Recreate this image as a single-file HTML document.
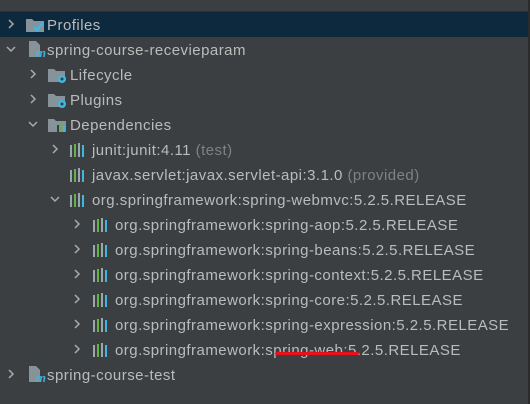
<!DOCTYPE html>
<html><head><style>
body{margin:0;width:530px;height:404px;background:#3c3f41;overflow:hidden;font-family:"Liberation Sans",sans-serif;font-size:15px;letter-spacing:0.47px;color:#bbbbbb;position:relative}
.tb{position:absolute;left:0;top:0;width:530px;height:11px;background:#3c3f41;border-bottom:1px solid #323232}
.r{position:absolute;left:0;width:528px;height:25px;line-height:25px;white-space:nowrap}
.sel{background:#0d293e}
.ch{position:absolute;top:0;width:10px;height:25px}
.ic{position:absolute;top:5px}
.t{position:absolute;top:1px}
.g{color:#808080}
.edge{position:absolute;right:0;top:0;width:2px;height:404px;background:#2b2b2b}
</style></head><body>
<div class="tb"></div>
<svg width="0" height="0" style="position:absolute"><defs>
<symbol id="cr" viewBox="0 0 10 10"><path d="M3 1 L7 5 L3 9" fill="none" stroke="#aaa" stroke-width="1.5"/></symbol>
<symbol id="cd" viewBox="0 0 10 10"><path d="M1 3 L5 7 L9 3" fill="none" stroke="#aaa" stroke-width="1.5"/></symbol>
<symbol id="lib" viewBox="0 0 18 16"><rect x="1" y="3" width="2" height="12" fill="#9aa7b0"/><rect x="5" y="2" width="2" height="13" fill="#62b543"/><rect x="9" y="1" width="2" height="14" fill="#9aa7b0"/><rect x="13" y="3" width="2" height="12" fill="#40b6e0"/></symbol>
<symbol id="fold" viewBox="0 0 20 16"><path d="M1 2h6l2 2h9v11H1z" fill="#87939a"/><circle cx="15" cy="12" r="4" fill="#40b6e0"/><circle cx="15" cy="12" r="1.5" fill="#3c3f41"/></symbol>
</defs></svg>
<div class="r sel" style="top:12px"><svg class="ch" style="left:6px;top:7px;height:10px" viewBox="0 0 10 10"><use href="#cr"/></svg><svg class="ic" width="20" height="16" style="left:25px"><path d="M1 2h6l2 2h10v11H1z" fill="#87939a"/><path d="M9 10l3 3 6-7" fill="none" stroke="#40b6e0" stroke-width="2.5"/></svg><span class="t" style="left:47px">Profiles</span></div>
<div class="r" style="top:37px"><svg class="ch" style="left:6px;top:7px;height:10px" viewBox="0 0 10 10"><use href="#cd"/></svg><svg class="ic" width="20" height="18" style="left:27px;top:3px"><path d="M2 1h7l4 4v12H2z" fill="#87939a"/><text x="9" y="17" font-size="11" font-style="italic" font-weight="bold" fill="#40b6e0">m</text></svg><span class="t" style="left:47px">spring-course-recevieparam</span></div>
<div class="r" style="top:62px"><svg class="ch" style="left:28px;top:7px;height:10px" viewBox="0 0 10 10"><use href="#cr"/></svg><svg class="ic" width="20" height="16" style="left:47px"><use href="#fold"/></svg><span class="t" style="left:70px">Lifecycle</span></div>
<div class="r" style="top:87px"><svg class="ch" style="left:28px;top:7px;height:10px" viewBox="0 0 10 10"><use href="#cr"/></svg><svg class="ic" width="20" height="16" style="left:47px"><use href="#fold"/></svg><span class="t" style="left:70px">Plugins</span></div>
<div class="r" style="top:112px"><svg class="ch" style="left:28px;top:7px;height:10px" viewBox="0 0 10 10"><use href="#cd"/></svg><svg class="ic" width="20" height="16" style="left:47px"><path d="M1 2h6l2 2h10v11H1z" fill="#87939a"/><rect x="10" y="8" width="2" height="7" fill="#3c3f41"/><rect x="13" y="7" width="2" height="8" fill="#62b543"/><rect x="16" y="9" width="2" height="6" fill="#40b6e0"/></svg><span class="t" style="left:70px">Dependencies</span></div>
<div class="r" style="top:137px"><svg class="ch" style="left:50px;top:7px;height:10px" viewBox="0 0 10 10"><use href="#cr"/></svg><svg class="ic" width="18" height="16" style="left:69px"><use href="#lib"/></svg><span class="t" style="left:92px">junit:junit:4.11 <span class="g">(test)</span></span></div>
<div class="r" style="top:162px"><svg class="ic" width="18" height="16" style="left:69px"><use href="#lib"/></svg><span class="t" style="left:92px">javax.servlet:javax.servlet-api:3.1.0 <span class="g">(provided)</span></span></div>
<div class="r" style="top:187px"><svg class="ch" style="left:50px;top:7px;height:10px" viewBox="0 0 10 10"><use href="#cd"/></svg><svg class="ic" width="18" height="16" style="left:69px"><use href="#lib"/></svg><span class="t" style="left:92px">org.springframework:spring-webmvc:5.2.5.RELEASE</span></div>
<div class="r" style="top:212px"><svg class="ch" style="left:72px;top:7px;height:10px" viewBox="0 0 10 10"><use href="#cr"/></svg><svg class="ic" width="18" height="16" style="left:92px"><use href="#lib"/></svg><span class="t" style="left:115px">org.springframework:spring-aop:5.2.5.RELEASE</span></div>
<div class="r" style="top:237px"><svg class="ch" style="left:72px;top:7px;height:10px" viewBox="0 0 10 10"><use href="#cr"/></svg><svg class="ic" width="18" height="16" style="left:92px"><use href="#lib"/></svg><span class="t" style="left:115px">org.springframework:spring-beans:5.2.5.RELEASE</span></div>
<div class="r" style="top:262px"><svg class="ch" style="left:72px;top:7px;height:10px" viewBox="0 0 10 10"><use href="#cr"/></svg><svg class="ic" width="18" height="16" style="left:92px"><use href="#lib"/></svg><span class="t" style="left:115px">org.springframework:spring-context:5.2.5.RELEASE</span></div>
<div class="r" style="top:287px"><svg class="ch" style="left:72px;top:7px;height:10px" viewBox="0 0 10 10"><use href="#cr"/></svg><svg class="ic" width="18" height="16" style="left:92px"><use href="#lib"/></svg><span class="t" style="left:115px">org.springframework:spring-core:5.2.5.RELEASE</span></div>
<div class="r" style="top:312px"><svg class="ch" style="left:72px;top:7px;height:10px" viewBox="0 0 10 10"><use href="#cr"/></svg><svg class="ic" width="18" height="16" style="left:92px"><use href="#lib"/></svg><span class="t" style="left:115px">org.springframework:spring-expression:5.2.5.RELEASE</span></div>
<div class="r" style="top:337px"><svg class="ch" style="left:72px;top:7px;height:10px" viewBox="0 0 10 10"><use href="#cr"/></svg><svg class="ic" width="18" height="16" style="left:92px"><use href="#lib"/></svg><span class="t" style="left:115px">org.springframework:spring-web:5.2.5.RELEASE</span></div>
<div style="position:absolute;left:275px;top:352px;width:84px;height:3px;background:#e8101a;border-radius:2px"></div>
<div class="r" style="top:362px"><svg class="ch" style="left:6px;top:7px;height:10px" viewBox="0 0 10 10"><use href="#cr"/></svg><svg class="ic" width="20" height="18" style="left:27px;top:3px"><path d="M2 1h7l4 4v12H2z" fill="#87939a"/><text x="9" y="17" font-size="11" font-style="italic" font-weight="bold" fill="#40b6e0">m</text></svg><span class="t" style="left:47px">spring-course-test</span></div>
<div class="edge"></div>
</body></html>
